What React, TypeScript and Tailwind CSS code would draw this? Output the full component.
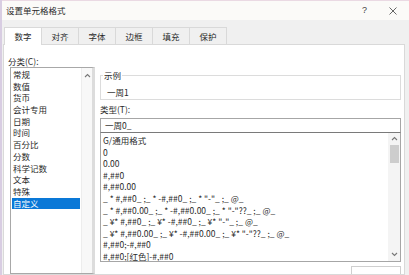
import React from "react";

const cats = ["常规", "数值", "货币", "会计专用", "日期", "时间", "百分比", "分数", "科学记数", "文本", "特殊", "自定义"];
const fmts = [
  "G/通用格式",
  "0",
  "0.00",
  "#,##0",
  "#,##0.00",
  '_ * #,##0_ ;_ * -#,##0_ ;_ * "-"_ ;_ @_',
  '_ * #,##0.00_ ;_ * -#,##0.00_ ;_ * "-"??_ ;_ @_',
  '_ ¥* #,##0_ ;_ ¥* -#,##0_ ;_ ¥* "-"_ ;_ @_',
  '_ ¥* #,##0.00_ ;_ ¥* -#,##0.00_ ;_ ¥* "-"??_ ;_ @_',
  "#,##0;-#,##0",
  "#,##0;[红色]-#,##0",
];
const tabs = ["数字", "对齐", "字体", "边框", "填充", "保护"];

function Up() {
  return (
    <svg width="7" height="5" viewBox="0 0 7 5">
      <path d="M1 4 L3.5 1.5 L6 4" fill="none" stroke="#777" strokeWidth="1.1" />
    </svg>
  );
}
function Down() {
  return (
    <svg width="7" height="5" viewBox="0 0 7 5">
      <path d="M1 1 L3.5 3.5 L6 1" fill="none" stroke="#777" strokeWidth="1.1" />
    </svg>
  );
}

export default function App() {
  return (
    <div
      className="w-[409px] h-[275px] overflow-hidden flex bg-[#f0f0f0] text-[#2a2a2a] text-[8.5px]"
      style={{ fontFamily: '"Noto Sans CJK SC", "Noto Sans", sans-serif' }}
    >
      <div className="w-[2px] shrink-0 bg-[#d8cde2]" />
      <div className="flex-1 flex flex-col min-w-0">
        {/* title bar */}
        <div className="h-[20px] shrink-0 bg-[#fbfaf8] border-t border-[#ead9e3] flex items-center pl-[4px] pr-[10px]">
          <span className="text-[8.5px] leading-none">设置单元格格式</span>
          <span className="ml-auto mr-[22px] text-[9px] text-[#444] leading-none" style={{ fontFamily: '"Liberation Sans", sans-serif' }}>?</span>
          <svg width="8" height="8" viewBox="0 0 8 8" className="mr-[2px]">
            <path d="M0.5 0.5 L7.5 7.5 M7.5 0.5 L0.5 7.5" stroke="#555" strokeWidth="0.9" />
          </svg>
        </div>
        {/* tabs */}
        <div className="h-[24px] shrink-0 flex items-end pl-[2px] pt-[7px]">
          {tabs.map((t, i) => (
            <div
              key={t}
              className={
                i === 0
                  ? "w-[38px] h-[18px] bg-white border border-b-0 border-[#d9d9d9] flex items-center justify-center relative top-[1px] z-10"
                  : "w-[37px] h-[17px] border border-l-0 border-b-0 border-[#d9d9d9] flex items-center justify-center"
              }
            >
              {t}
            </div>
          ))}
        </div>
        {/* panel */}
        <div className="flex-1 ml-[1px] mr-[4px] bg-white border border-[#d9d9d9] flex pt-[10px] pl-[6px] pr-[3px] min-h-0">
          {/* left column */}
          <div className="w-[85px] shrink-0 flex flex-col">
            <div className="h-[12px] leading-[12px] -ml-[2px]">分类(C):</div>
            <div className="flex-1 border border-[#a8a8a8] border-r-[3px] border-r-[#dcdcdc] flex min-h-0">
              <div className="flex-1 pt-[1px] pl-[1px] pr-[1px]">
                {cats.map((c, i) => (
                  <div
                    key={c}
                    className={
                      i === cats.length - 1
                        ? "h-[11.7px] leading-[11.7px] bg-[#0a78d7] text-white pl-[1px]"
                        : "h-[11.7px] leading-[11.7px] pl-[1px]"
                    }
                  >
                    {c}
                  </div>
                ))}
              </div>
              <div className="w-[11px] bg-[#f8f8f8] border-l border-[#ededed] flex flex-col items-center pt-[5px]">
                <Up />
              </div>
            </div>
          </div>
          {/* right column */}
          <div className="flex-1 ml-[5px] flex flex-col">
            <div className="mt-[20px] h-[28px] border border-[#dcdcdc] relative pt-[10px] pl-[6px] leading-[12px]">
              <span className="absolute -top-[7px] left-[2px] bg-white px-[1px] leading-[12px]">示例</span>
              一周1
            </div>
            <div className="mt-[3px] h-[12px] leading-[12px]">类型(T):</div>
            <div className="mt-[3px] h-[19px] border border-[#a6a6a6] border-b-[#7a7a7a] pl-[4px] flex items-center">一周0_</div>
            <div className="h-[129px] border border-t-0 border-[#a6a6a6] flex">
              <div className="flex-1 pl-[2px] pt-[2px] whitespace-pre overflow-hidden">
                {fmts.map((f) => (
                  <div key={f} className="h-[11.6px] leading-[11.6px]">
                    {f}
                  </div>
                ))}
              </div>
              <div className="w-[12px] bg-[#f4f4f4] flex flex-col items-center">
                <div className="h-[12px] flex items-center justify-center"><Up /></div>
                <div className="w-[9px] h-[18px] bg-[#cdcdcd]" />
                <div className="flex-1" />
                <div className="h-[12px] flex items-center justify-center"><Down /></div>
              </div>
            </div>
            <div className="mt-[4px] ml-auto w-[50px] h-[10px] border border-[#cfcfcf] border-b-0" />
          </div>
        </div>
      </div>
    </div>
  );
}
